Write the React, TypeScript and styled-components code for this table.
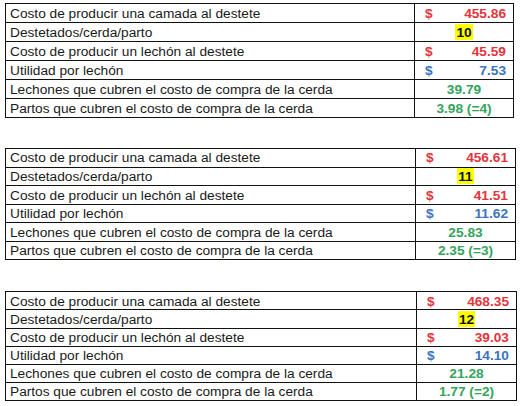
import * as React from 'react';
import styled, { createGlobalStyle } from 'styled-components';

const GlobalStyle = createGlobalStyle`
  html, body {
    margin: 0;
    padding: 0;
    background: #ffffff;
  }
`;

type Tone = 'red' | 'blue' | 'green' | 'black';

const tones: Record<Tone, string> = {
  red: '#e3343c',
  blue: '#3a74bd',
  green: '#34a45c',
  black: '#111111',
};

const Page = styled.div`
  display: flex;
  flex-direction: column;
  padding: 3px 0 0 5px;
  font-family: 'Liberation Sans', Arial, sans-serif;
  color: #1a1a1a;
`;

const Sheet = styled.table<{ $width: number; $gap: number }>`
  width: ${p => p.$width}px;
  border-collapse: collapse;
  table-layout: fixed;
  margin-bottom: ${p => p.$gap}px;
`;

const Row = styled.tr<{ $height: number }>`
  height: ${p => p.$height}px;
`;

const Label = styled.td`
  border: 1px solid #111;
  padding: 1px 0 0 4px;
  font-size: 13.7px;
  line-height: 1;
  white-space: nowrap;
  overflow: hidden;
`;

const ValueCell = styled.td<{ $width: number }>`
  box-sizing: border-box;
  width: ${p => p.$width}px;
  border: 1px solid #111;
  padding: 1px 0 0;
  font-size: 13.7px;
  font-weight: bold;
  line-height: 1;
`;

const Money = styled.div<{ $tone: Tone }>`
  display: flex;
  justify-content: space-between;
  padding: 0 7px 0 10px;
  color: ${p => tones[p.$tone]};
`;

const Centered = styled.div<{ $tone: Tone }>`
  text-align: center;
  color: ${p => tones[p.$tone]};
`;

const Highlight = styled.span`
  background: #ffff00;
  color: #111;
  padding: 1px 1px 0;
`;

type Value =
  | { kind: 'money'; tone: Tone; amount: string }
  | { kind: 'mark'; text: string }
  | { kind: 'plain'; tone: Tone; text: string };

type Block = {
  width: number;
  valueWidth: number;
  rowHeight: number;
  gap: number;
  values: Value[];
};

const labels = [
  'Costo de producir una camada al destete',
  'Destetados/cerda/parto',
  'Costo de producir un lechón al destete',
  'Utilidad por lechón',
  'Lechones que cubren el costo de compra de la cerda',
  'Partos que cubren el costo de compra de la cerda',
];

const blocks: Block[] = [
  {
    width: 509,
    valueWidth: 99,
    rowHeight: 19,
    gap: 30,
    values: [
      { kind: 'money', tone: 'red', amount: '455.86' },
      { kind: 'mark', text: '10' },
      { kind: 'money', tone: 'red', amount: '45.59' },
      { kind: 'money', tone: 'blue', amount: '7.53' },
      { kind: 'plain', tone: 'green', text: '39.79' },
      { kind: 'plain', tone: 'green', text: '3.98 (=4)' },
    ],
  },
  {
    width: 511,
    valueWidth: 100,
    rowHeight: 18.55,
    gap: 31,
    values: [
      { kind: 'money', tone: 'red', amount: '456.61' },
      { kind: 'mark', text: '11' },
      { kind: 'money', tone: 'red', amount: '41.51' },
      { kind: 'money', tone: 'blue', amount: '11.62' },
      { kind: 'plain', tone: 'green', text: '25.83' },
      { kind: 'plain', tone: 'green', text: '2.35 (=3)' },
    ],
  },
  {
    width: 512,
    valueWidth: 100,
    rowHeight: 18.2,
    gap: 0,
    values: [
      { kind: 'money', tone: 'red', amount: '468.35' },
      { kind: 'mark', text: '12' },
      { kind: 'money', tone: 'red', amount: '39.03' },
      { kind: 'money', tone: 'blue', amount: '14.10' },
      { kind: 'plain', tone: 'green', text: '21.28' },
      { kind: 'plain', tone: 'green', text: '1.77 (=2)' },
    ],
  },
];

const ValueContent: React.FC<{ value: Value }> = ({ value }) => {
  if (value.kind === 'money') {
    return (
      <Money $tone={value.tone}>
        <span>$</span>
        <span>{value.amount}</span>
      </Money>
    );
  }
  if (value.kind === 'mark') {
    return (
      <Centered $tone="black">
        <Highlight>{value.text}</Highlight>
      </Centered>
    );
  }
  return <Centered $tone={value.tone}>{value.text}</Centered>;
};

const App: React.FC = () => (
  <Page>
    <GlobalStyle />
    {blocks.map((block, i) => (
      <Sheet key={i} $width={block.width} $gap={block.gap}>
        <tbody>
          {labels.map((label, j) => (
            <Row key={label} $height={block.rowHeight}>
              <Label>{label}</Label>
              <ValueCell $width={block.valueWidth}>
                <ValueContent value={block.values[j]} />
              </ValueCell>
            </Row>
          ))}
        </tbody>
      </Sheet>
    ))}
  </Page>
);

export default App;
